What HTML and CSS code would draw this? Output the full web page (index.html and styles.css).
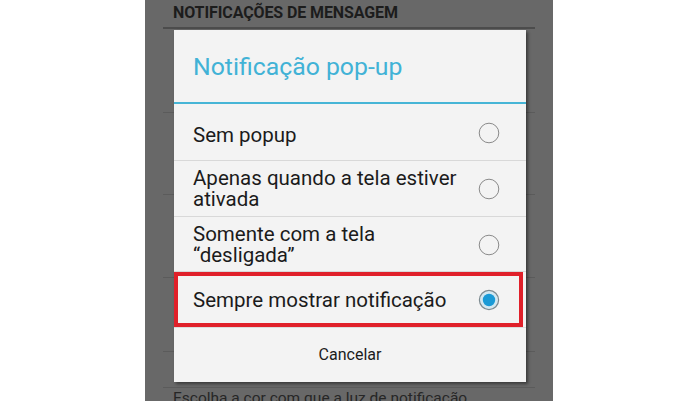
FILE: index.html
```html
<!DOCTYPE html>
<html lang="pt">
<head>
<meta charset="utf-8">
<title>Notificação pop-up</title>
<link rel="stylesheet" href="styles.css">
</head>
<body>
<div class="screen">
  <div class="list">
    <div class="section-title">NOTIFICAÇÕES DE MENSAGEM</div>
    <div class="bg-row r1"></div>
    <div class="bg-row r2"></div>
    <div class="bg-row r3"></div>
    <div class="bg-row r4"></div>
    <div class="bg-row r5"></div>
    <div class="bg-text">Escolha a cor com que a luz de notificação</div>
  </div>

  <div class="dialog">
    <div class="dialog-title">Notificação pop-up</div>
    <div class="dialog-rule"></div>
    <div class="option o1">
      <span class="label">Sem popup</span>
      <svg class="radio" width="22" height="22" viewBox="0 0 22 22"><circle cx="11" cy="11" r="9.8" fill="none" stroke="#8a8a8a" stroke-width="1"/></svg>
    </div>
    <div class="option o2">
      <span class="label">Apenas quando a tela estiver<br>ativada</span>
      <svg class="radio" width="22" height="22" viewBox="0 0 22 22"><circle cx="11" cy="11" r="9.8" fill="none" stroke="#8a8a8a" stroke-width="1"/></svg>
    </div>
    <div class="option o3">
      <span class="label">Somente com a tela<br>“desligada”</span>
      <svg class="radio" width="22" height="22" viewBox="0 0 22 22"><circle cx="11" cy="11" r="9.8" fill="none" stroke="#8a8a8a" stroke-width="1"/></svg>
    </div>
    <div class="option o4">
      <span class="label">Sempre mostrar notificação</span>
      <svg class="radio" width="22" height="22" viewBox="0 0 22 22"><circle cx="11" cy="11" r="9.6" fill="#d3e8f1" stroke="#7d8a90" stroke-width="1.2"/><circle cx="11" cy="11" r="6.2" fill="#1a9ad6"/></svg>
      <div class="highlight"></div>
    </div>
    <div class="cancel">Cancelar</div>
  </div>
</div>
</body>
</html>
```

FILE: styles.css
```css
html, body {
  margin: 0;
  padding: 0;
  background: #ffffff;
}

body {
  width: 695px;
  height: 401px;
  overflow: hidden;
  font-family: Roboto, "Liberation Sans", sans-serif;
}

.screen {
  position: relative;
  margin-left: 145px;
  width: 408px;
  height: 401px;
  background: #686868;
  overflow: hidden;
}

.list {
  padding: 0 18px;
}

.section-title {
  height: 27px;
  border-bottom: 2px solid #4c4c4c;
  padding-left: 10px;
  font-size: 16px;
  font-weight: bold;
  line-height: 25px;
  color: #1c1c1c;
  letter-spacing: -0.1px;
}

.bg-row {
  border-bottom: 1px solid #5b5b5b;
}

.r1 { height: 83px; }
.r2 { height: 81px; }
.r3 { height: 82px; }
.r4 { height: 73px; }
.r5 { height: 35px; }

.bg-text {
  padding-left: 10px;
  font-size: 15.5px;
  line-height: 20px;
  color: #262626;
}

.dialog {
  position: absolute;
  left: 29px;
  top: 30px;
  width: 352px;
  height: 352px;
  background: #f3f3f3;
  box-shadow: 2px 2px 3px rgba(0, 0, 0, 0.45);
  color: #1b1b1b;
}

.dialog-title {
  height: 68px;
  padding: 4px 0 0 19px;
  font-size: 24.8px;
  line-height: 66px;
  color: #41b2d6;
}

.dialog-rule {
  height: 2px;
  background: #46b5d6;
}

.option {
  position: relative;
  display: flex;
  align-items: center;
  justify-content: space-between;
  padding-left: 19px;
  padding-right: 26px;
  font-size: 20.5px;
  line-height: 21px;
  border-bottom: 1px solid #d8d8d8;
  box-sizing: border-box;
}

.o1 { height: 57px; padding-top: 7px; }
.o1 .radio { margin-top: -6px; }
.o2 { height: 56px; padding-top: 1px; }
.o3 { height: 55px; padding-top: 1px; }
.o4 { height: 56px; border-bottom: 1px solid #dcdcdc; padding-top: 1px; }

.label {
  display: block;
}

.radio {
  flex: none;
  display: block;
}

.highlight {
  position: absolute;
  left: 0;
  right: 3px;
  top: 0;
  bottom: 0;
  border: 4px solid #e0202a;
}

.cancel {
  height: 54px;
  text-align: center;
  font-size: 16px;
  line-height: 54px;
  color: #1b1b1b;
}
```
